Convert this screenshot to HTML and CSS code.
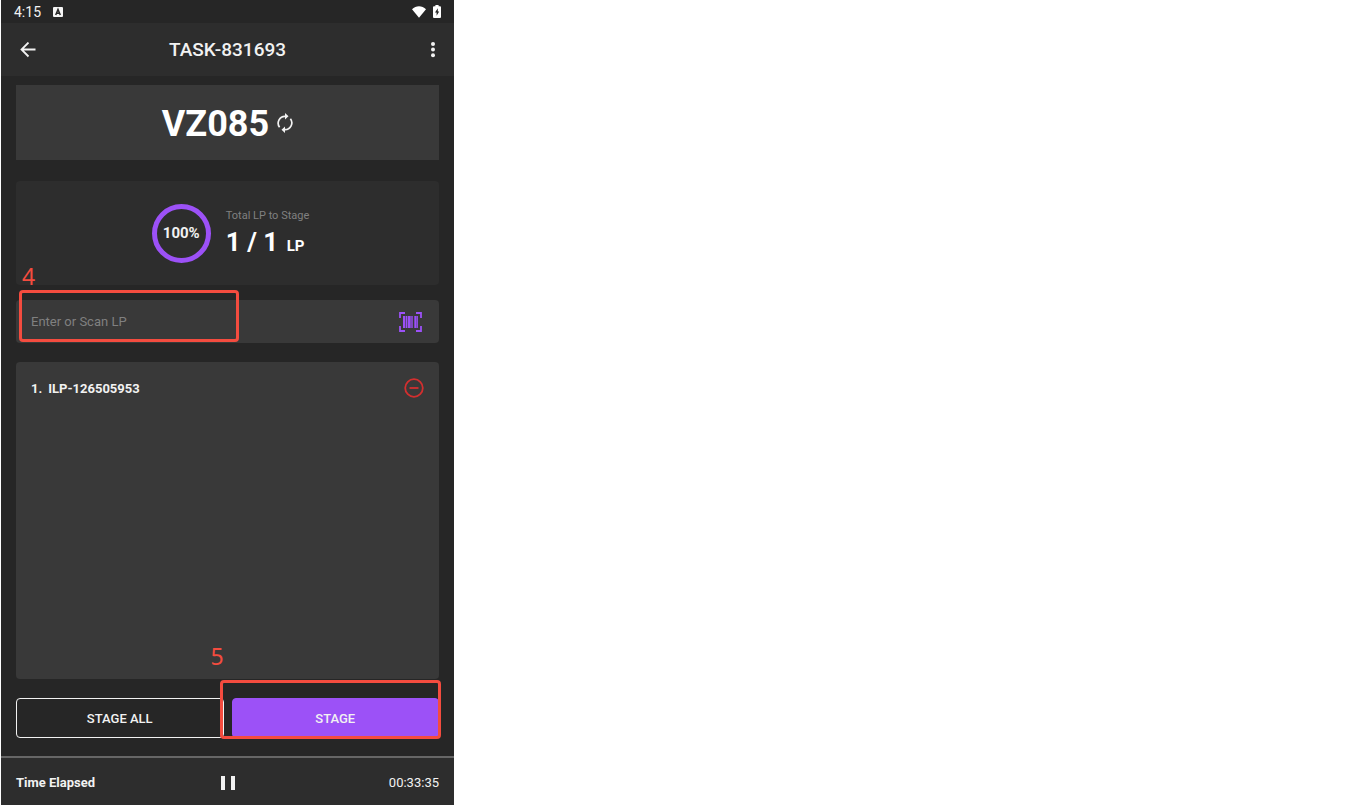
FILE: index.html
```html
<!DOCTYPE html>
<html lang="en">
  <head>
    <meta charset="UTF-8" />
    <title>TASK-831693</title>
    <meta name="viewport" content="width=device-width, initial-scale=1.0" />
    <link rel="stylesheet" href="styles.css">
  </head>
  <body>
    <div class="screen">
      <!-- Android status bar -->
      <div class="status-bar">
        <span>4:15</span>
        <svg class="app-icon" width="10" height="10" viewBox="0 0 10 10">
          <rect width="10" height="10" rx="1" fill="#f5f5f5" />
          <path d="M2.7 8 5 2.4 7.3 8M3.6 6.2h2.8" fill="none" stroke="#262626" stroke-width="1.5" />
        </svg>
        <svg class="wifi-icon" width="14" height="12" viewBox="0 0 14 12">
          <path d="M0 3.2C4-.8 10-.8 14 3.2L7 11.8z" fill="#fff" />
        </svg>
        <svg width="8" height="13" viewBox="0 0 8 13">
          <path d="M2.4 0h3.2v1.2H7q1 0 1 1V12q0 1-1 1H1q-1 0-1-1V2.2q0-1 1-1h1.4z" fill="#fff" />
          <path d="M4.8 3.2 2 7.6h1.6v3.2L6.2 6.4H4.8z" fill="#262626" />
        </svg>
      </div>

      <header class="app-bar">
        <button class="icon-btn" type="button" aria-label="Back">
          <svg width="16" height="16" viewBox="0 0 16 16" fill="none" stroke="#f2f2f2" stroke-width="1.8">
            <path d="M15.5 7.500H1.800M8.500 .5 1.500 7.500l7 7" />
          </svg>
        </button>
        <h1>TASK-831693</h1>
        <button class="icon-btn menu-btn" type="button" aria-label="More">
          <svg width="4" height="16" viewBox="0 0 4 16" fill="#f2f2f2">
            <circle cx="2" cy="2" r="2" />
            <circle cx="2" cy="7.600" r="2" />
            <circle cx="2" cy="13.200" r="2" />
          </svg>
        </button>
      </header>

      <main>
        <section class="location">
          <h2>VZ085</h2>
          <button class="icon-btn" type="button" aria-label="Refresh">
            <svg width="16" height="20" viewBox="0 0 16 20">
              <g fill="none" stroke="#f2f2f2" stroke-width="1.7">
                <path d="M2.6 14.2A6.800 6.800 0 0 1 8.500 3.300" />
                <path d="M13.400 5.800A6.800 6.800 0 0 1 7.500 16.700" />
              </g>
              <path d="M8 0l3.500 3.300L8 6.600zM8 13.400v6.600l-3.500-3.300z" fill="#f2f2f2" />
            </svg>
          </button>
        </section>

        <section class="progress">
          <div class="ring">100%</div>
          <div class="progress-text">
            <p class="progress-label">Total LP to Stage</p>
            <p class="progress-count">1 / 1 <small>LP</small></p>
          </div>
        </section>

        <div class="scan">
          <input type="text" placeholder="Enter or Scan LP" aria-label="Enter or Scan LP" />
          <button class="icon-btn" type="button" aria-label="Scan barcode">
            <svg width="23" height="20" viewBox="0 0 23 20">
              <path d="M6 1H1v5M17 1h5v5M6 19H1v-5M17 19h5v-5" fill="none" stroke="#9c51f7" stroke-width="1.8" />
              <path d="M4 4h2v12H4zM7 4h1v12H7zM9 4h2.500v12H9zM12.500 4h1v12h-1zM15.500 4h2v12h-2zM18.200 4h.8v12h-.8z" fill="#9c51f7" />
              <path d="M4 4h10v12H4zM15 4h4v12h-4z" fill="#9c51f7" opacity="0.4" />
            </svg>
          </button>
          <div class="mark mark-scan"></div>
          <span class="mark-number mark-number-scan">4</span>
        </div>

        <ol class="lp-list">
          <li>
            <span class="lp-index">1.</span>
            <span>ILP-126505953</span>
            <button class="icon-btn" type="button" aria-label="Remove ILP-126505953">
              <svg width="20" height="20" viewBox="0 0 20 20" fill="none" stroke="#d32f2f" stroke-width="1.8">
                <circle cx="10" cy="10" r="8.800" />
                <path d="M5.500 10h9" />
              </svg>
            </button>
          </li>
        </ol>

        <div class="actions">
          <button class="btn btn-outline" type="button">STAGE ALL</button>
          <div class="stage">
            <button class="btn btn-primary" type="button">STAGE</button>
            <div class="mark mark-stage"></div>
            <span class="mark-number mark-number-stage">5</span>
          </div>
        </div>
      </main>

      <footer>
        <strong>Time Elapsed</strong>
        <button class="icon-btn" type="button" aria-label="Pause">
          <svg width="14" height="14" viewBox="0 0 14 14" fill="#f2f2f2">
            <path d="M0 0h4v14H0zM10 0h4v14h-4z" />
          </svg>
        </button>
        <span class="elapsed">00:33:35</span>
      </footer>
    </div>
  </body>
</html>
```
FILE: styles.css
```css
/* General */
* {
  box-sizing: border-box;
}
body {
  margin: 0;
  background-color: #fff;
  font-family: Roboto, "Liberation Sans", sans-serif;
  color: #f2f2f2;
}
h1,
h2,
p {
  margin: 0;
}
button {
  font-family: inherit;
  color: inherit;
  cursor: pointer;
}
svg {
  display: block;
}
.screen {
  display: flex;
  flex-direction: column;
  width: 100%;
  max-width: 453px;
  min-height: 100vh;
  margin-left: 1px;
  background-color: #262626;
}
.icon-btn {
  padding: 0;
  border: none;
  background: none;
}

/* Top bars */
.status-bar {
  display: flex;
  align-items: center;
  height: 23px;
  padding: 0 13px;
  font-size: 14px;
}
.app-icon {
  margin-left: 12px;
}
.wifi-icon {
  margin-left: auto;
  margin-right: 7px;
}
.app-bar {
  display: grid;
  grid-template-columns: 1fr auto 1fr;
  align-items: center;
  height: 53px;
  padding: 0 19px;
  background-color: #2d2d2d;
}
.app-bar h1 {
  font-size: 19px;
  font-weight: 500;
}
.app-bar .icon-btn {
  justify-self: start;
}
.app-bar .menu-btn {
  justify-self: end;
}

/* Content */
main {
  display: flex;
  flex: 1;
  flex-direction: column;
  padding: 9px 15px 18px;
}
.location {
  display: flex;
  align-items: center;
  justify-content: center;
  gap: 8px;
  height: 75px;
  background-color: #393939;
}
.location h2 {
  padding-top: 2px;
  color: #fff;
  font-size: 36px;
  line-height: 42px;
}
.progress {
  display: flex;
  align-items: center;
  justify-content: center;
  gap: 15px;
  height: 104px;
  margin-top: 21px;
  padding-left: 6px;
  border-radius: 4px;
  background-color: #2d2d2d;
}
.ring {
  display: flex;
  align-items: center;
  justify-content: center;
  width: 59px;
  height: 59px;
  border: 5px solid #9c51f7;
  border-radius: 50%;
  font-size: 15px;
  font-weight: bold;
}
.progress-text {
  padding-top: 5px;
}
.progress-label {
  color: #808080;
  font-size: 11px;
  line-height: 16px;
}
.progress-count {
  color: #fff;
  font-size: 26px;
  font-weight: bold;
  line-height: 36px;
}
.progress-count small {
  margin-left: 2px;
  font-size: 15px;
}

/* Scan field */
.scan {
  position: relative;
  display: flex;
  align-items: center;
  height: 43px;
  margin-top: 15px;
  padding: 0 17px 0 15px;
  border-radius: 4px;
  background-color: #393939;
}
.scan input {
  flex: 1;
  min-width: 0;
  padding: 0;
  border: none;
  outline: none;
  background: none;
  color: #f2f2f2;
  font-family: inherit;
  font-size: 13px;
}
.scan input::placeholder {
  color: #808080;
}

/* List */
.lp-list {
  flex: 1;
  margin: 19px 0;
  padding: 16px 15px;
  border-radius: 4px;
  background-color: #393939;
  list-style: none;
}
.lp-list li {
  display: flex;
  align-items: center;
  font-size: 13px;
  font-weight: bold;
}
.lp-index {
  margin-right: 6px;
}
.lp-list .icon-btn {
  margin-left: auto;
}

/* Buttons */
.actions {
  display: grid;
  grid-template-columns: 1fr 1fr;
  gap: 8px;
}
.stage {
  position: relative;
}
.btn {
  width: 100%;
  height: 40px;
  border: 1px solid #f2f2f2;
  border-radius: 4px;
  font-size: 13px;
  font-weight: 500;
}
.btn-outline {
  background-color: transparent;
}
.btn-primary {
  border-color: #9c51f7;
  background-color: #9c51f7;
}

/* Step marks */
.mark {
  position: absolute;
  border: 3px solid #f44c3f;
  border-radius: 4px;
  pointer-events: none;
}
.mark-scan {
  top: -10px;
  left: 3px;
  width: 220px;
  height: 52px;
}
.mark-stage {
  top: -18px;
  right: -2px;
  bottom: -1px;
  left: -12px;
}
.mark-number {
  position: absolute;
  color: #f44c3f;
  font-family: "Noto Sans", sans-serif;
  font-size: 23px;
  line-height: 24px;
}
.mark-number-scan {
  top: -36px;
  left: 6px;
}
.mark-number-stage {
  top: -54px;
  left: -21px;
}

/* Footer */
footer {
  display: grid;
  grid-template-columns: 1fr auto 1fr;
  align-items: center;
  height: 49px;
  padding: 2px 15px 0;
  border-top: 2px solid #666;
  background-color: #2d2d2d;
  font-size: 13px;
}
.elapsed {
  text-align: right;
}
```
